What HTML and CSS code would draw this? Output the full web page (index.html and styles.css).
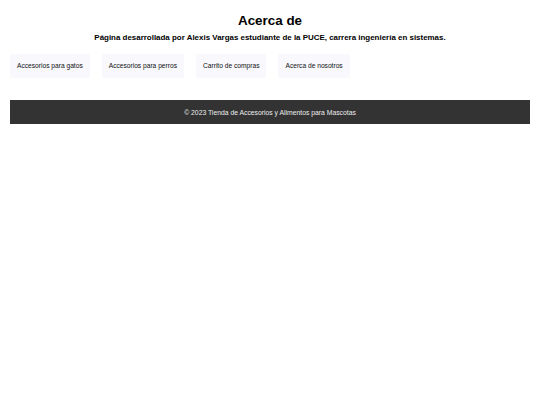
FILE: index.html
```html
<!DOCTYPE html>
<html lang="es">
<head>
    <meta charset="UTF-8">
    <meta name="viewport" content="width=device-width, initial-scale=1.0">
    <title>Acerca de</title>
    <link rel="stylesheet" href="styles.css">
</head>
<body>

    <header class="cabecera">
        <h1>Acerca de</h1>
        <p>Página desarrollada por Alexis Vargas estudiante de la PUCE, carrera ingeniería en sistemas.</p>
    </header>

    <!-- Menu principal -->
    <nav class="menu">
        <a href="gatos.html">Accesorios para gatos</a>
        <a href="perros.html">Accesorios para perros</a>
        <a href="carrito.html">Carrito de compras</a>
        <a href="acerca.html">Acerca de nosotros</a>
    </nav>

    <footer class="pie">
        <p>&copy; 2023 Tienda de Accesorios y Alimentos para Mascotas</p>
    </footer>

</body>
</html>
```

FILE: styles.css
```css
body {
    font-family: "Liberation Sans", Arial, sans-serif;
    background-color: #fff;
    color: #000;
    margin: 0;
    padding: 13px 10px;
}

.cabecera {
    text-align: center;
}

.cabecera h1 {
    font-size: 13.4px;
    margin: 0;
    line-height: 16px;
}

.cabecera p {
    font-size: 7.95px;
    font-weight: bold;
    margin: 4px 0 0;
    line-height: 10px;
}

.menu {
    display: flex;
    gap: 12px;
    margin-top: 11px;
}

.menu a {
    background-color: #f8f8fd;
    color: #111;
    text-decoration: none;
    font-size: 6.65px;
    line-height: 8px;
    padding: 8px 7px;
}

.pie {
    background-color: #333;
    color: #eee;
    text-align: center;
    margin-top: 22px;
    height: 24px;
    display: flex;
    align-items: center;
    justify-content: center;
}

.pie p {
    margin: 0;
    font-size: 6.8px;
}
```
